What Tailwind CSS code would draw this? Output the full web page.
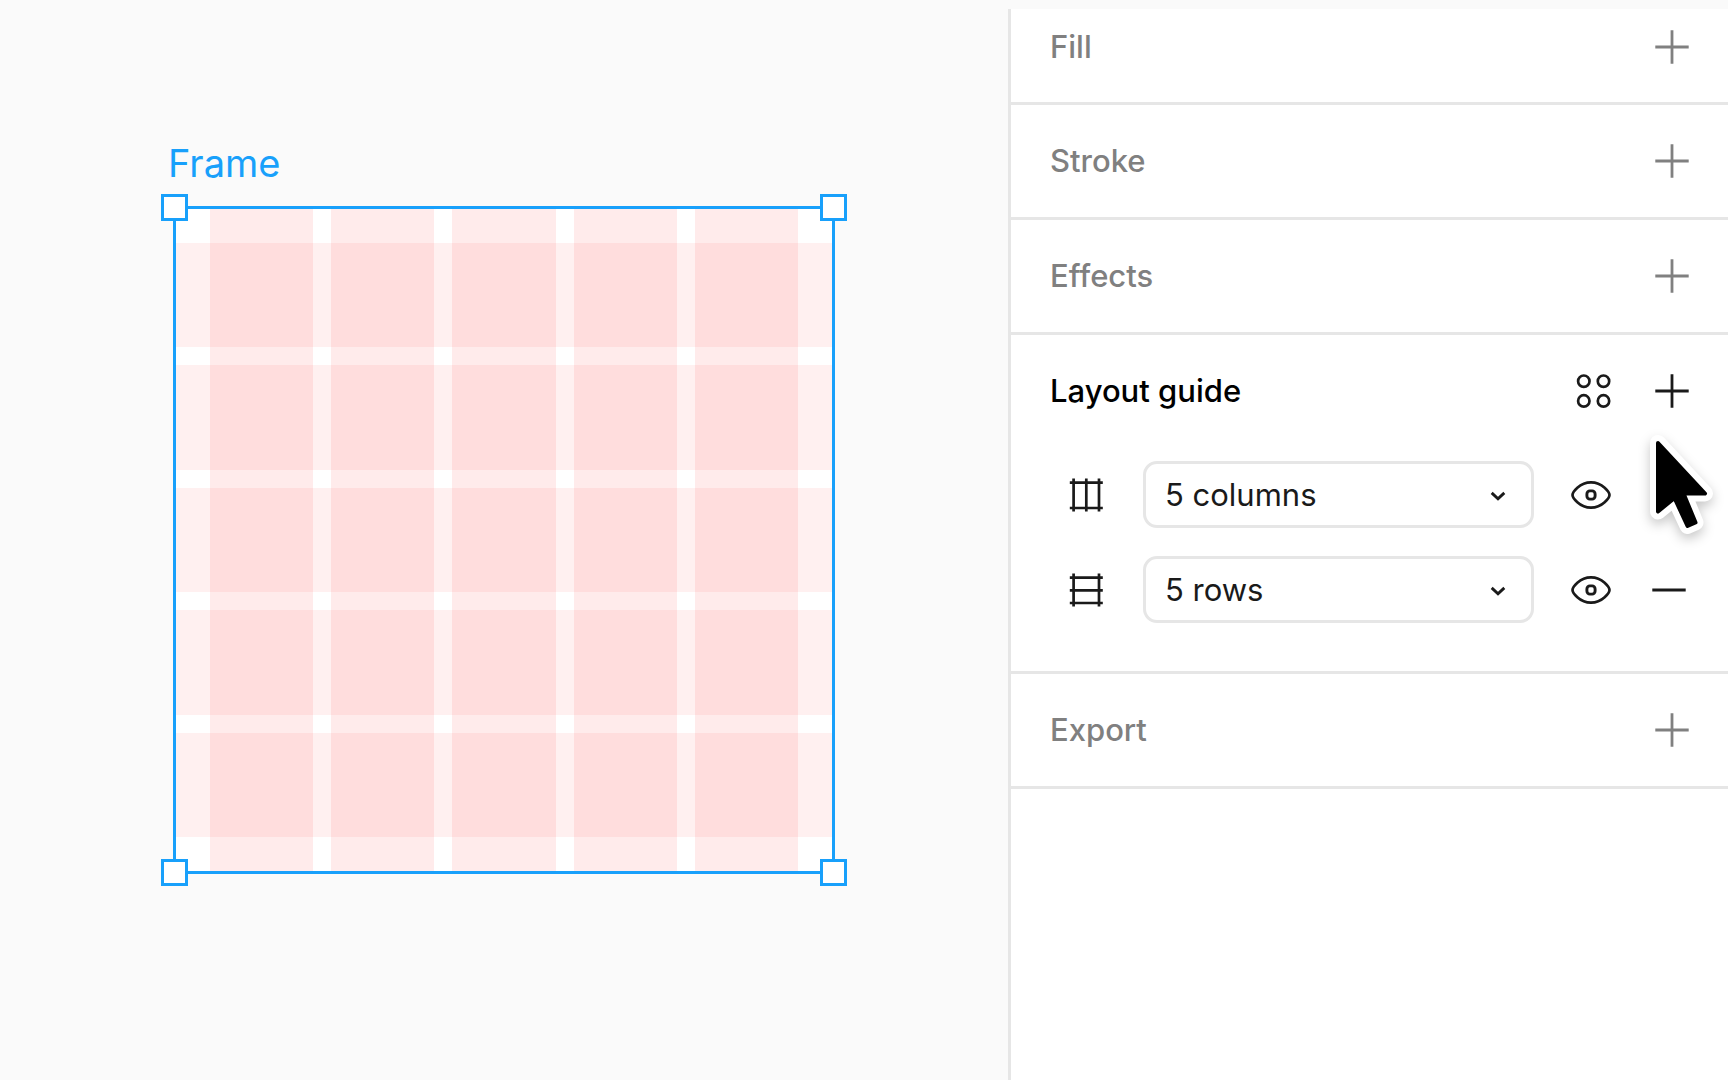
<!DOCTYPE html>
<html lang="en">
<head>
    <meta charset="UTF-8">
    <meta name="viewport" content="width=device-width, initial-scale=1.0">
    <title>Layout guide</title>
    <script src="https://cdn.jsdelivr.net/npm/@tailwindcss/browser@4"></script>
</head>
<body class="flex h-screen overflow-hidden bg-[#fafafa] font-['Inter',sans-serif]">

    <!-- shared icons -->
    <svg class="hidden">
        <symbol id="plus" viewBox="0 0 36 36"><path d="M18 1.3v33.4M1.3 18h33.4" fill="none" stroke="currentColor" stroke-width="2.8"/></symbol>
        <symbol id="minus" viewBox="0 0 36 36"><path d="M1.3 18h33.4" fill="none" stroke="currentColor" stroke-width="2.8"/></symbol>
        <symbol id="eye" viewBox="0 0 40 30">
            <path d="M1.5 15C1.5 12.6 8.3 2.3 20 2.3S38.5 12.6 38.5 15 31.7 27.7 20 27.7 1.5 17.4 1.5 15Z" fill="none" stroke="currentColor" stroke-width="2.7"/>
            <rect x="15.9" y="10.9" width="8.2" height="8.2" rx="3" fill="none" stroke="currentColor" stroke-width="2.9"/>
        </symbol>
        <symbol id="chevron" viewBox="0 0 16 10"><path d="M1.7 1.9 8 7.7l6.3-5.8" fill="none" stroke="currentColor" stroke-width="2.9"/></symbol>
    </svg>

    <!-- canvas -->
    <main class="flex flex-1 items-center justify-center">
        <div class="relative h-[668px] w-[662px] border-3 border-[#18a0fb] bg-white">
            <span class="absolute bottom-full -left-2 mb-5 text-[38px] leading-[52px] text-[#18a0fb]">Frame</span>

            <div class="absolute inset-0 grid grid-rows-5 gap-[18px] py-[34px]">
                <div class="bg-[#ff0000]/6"></div>
                <div class="bg-[#ff0000]/6"></div>
                <div class="bg-[#ff0000]/6"></div>
                <div class="bg-[#ff0000]/6"></div>
                <div class="bg-[#ff0000]/6"></div>
            </div>
            <div class="absolute inset-0 grid grid-cols-5 gap-[18px] px-[34px]">
                <div class="bg-[#ff0000]/8"></div>
                <div class="bg-[#ff0000]/8"></div>
                <div class="bg-[#ff0000]/8"></div>
                <div class="bg-[#ff0000]/8"></div>
                <div class="bg-[#ff0000]/8"></div>
            </div>

            <div class="absolute -top-[15px] -left-[15px] size-[27px] border-3 border-[#18a0fb] bg-white"></div>
            <div class="absolute -top-[15px] -right-[15px] size-[27px] border-3 border-[#18a0fb] bg-white"></div>
            <div class="absolute -bottom-[15px] -left-[15px] size-[27px] border-3 border-[#18a0fb] bg-white"></div>
            <div class="absolute -right-[15px] -bottom-[15px] size-[27px] border-3 border-[#18a0fb] bg-white"></div>
        </div>
    </main>

    <!-- properties panel -->
    <aside class="mt-[9px] w-5/12 border-l-3 border-[#e6e6e6] bg-white text-[31px] leading-10 text-[#1a1a1a]">
        <section class="flex h-24 items-center justify-between border-b-3 border-[#e6e6e6] pr-7 pb-[18px] pl-[39px] text-[#808080]">
            <h2 class="font-medium">Fill</h2>
            <button type="button" aria-label="Add fill" class="flex size-14 items-center justify-center"><svg class="size-9"><use href="#plus"/></svg></button>
        </section>
        <section class="flex h-[115px] items-center justify-between border-b-3 border-[#e6e6e6] pr-7 pl-[39px] text-[#808080]">
            <h2 class="font-medium">Stroke</h2>
            <button type="button" aria-label="Add stroke" class="flex size-14 items-center justify-center"><svg class="size-9"><use href="#plus"/></svg></button>
        </section>
        <section class="flex h-[115px] items-center justify-between border-b-3 border-[#e6e6e6] pr-7 pl-[39px] text-[#808080]">
            <h2 class="font-medium">Effects</h2>
            <button type="button" aria-label="Add effect" class="flex size-14 items-center justify-center"><svg class="size-9"><use href="#plus"/></svg></button>
        </section>

        <section class="border-b-3 border-[#e6e6e6] pb-12">
            <div class="flex h-28 items-center pr-7 pl-[39px]">
                <h2 class="flex-1 font-medium text-black">Layout guide</h2>
                <button type="button" aria-label="Styles" class="mr-[22px] flex size-14 items-center justify-center">
                    <svg class="size-9" viewBox="0 0 36 36" fill="none" stroke="currentColor" stroke-width="2.7">
                        <circle cx="7.8" cy="8.2" r="5.7"/>
                        <circle cx="27.5" cy="8.2" r="5.7"/>
                        <circle cx="7.8" cy="27.9" r="5.7"/>
                        <circle cx="27.5" cy="27.9" r="5.7"/>
                    </svg>
                </button>
                <button type="button" aria-label="Add layout guide" class="flex size-14 items-center justify-center"><svg class="size-9"><use href="#plus"/></svg></button>
            </div>

            <div class="flex flex-col gap-7 pt-[14px] pr-[31px] pl-[57px]">
                <div class="relative flex items-center">
                    <svg class="mr-[39px] size-9" viewBox="0 0 36 36" fill="none" stroke="currentColor" stroke-width="2.7">
                        <path d="M5.6 1.5v33M18.3 1.5v33M31 1.5v33M1.8 5.6h33M1.8 31h33"/>
                    </svg>
                    <div class="relative flex-1">
                        <select aria-label="Columns" class="block h-[67px] w-full appearance-none rounded-[14px] border-3 border-[#e6e6e6] bg-white pl-[19px]">
                            <option>5 columns</option>
                        </select>
                        <svg class="pointer-events-none absolute top-[30px] right-7 h-[10px] w-4"><use href="#chevron"/></svg>
                    </div>
                    <button type="button" aria-label="Hide columns" class="mr-[22px] ml-[29px] flex size-14 items-center justify-center"><svg class="h-[30px] w-10"><use href="#eye"/></svg></button>
                    <button type="button" aria-label="Remove columns" class="flex size-14 items-center justify-center"><svg class="size-9"><use href="#minus"/></svg></button>

                    <!-- mouse pointer -->
                    <svg class="pointer-events-none absolute -top-[30px] -right-[31px] h-[120px] w-[90px] drop-shadow-[0_5px_6px_rgb(0_0_0/0.22)]" viewBox="0 0 90 120" stroke-linejoin="round">
                        <path d="M20 12 67 62.500H45.500L57.500 91.500 49.500 95 36.500 67 20 80.500Z" fill="#fff" stroke="#fff" stroke-width="16"/>
                        <path d="M20 12 67 62.500H45.500L57.500 91.500 49.500 95 36.500 67 20 80.500Z" stroke="#000" stroke-width="4"/>
                    </svg>
                </div>

                <div class="flex items-center">
                    <svg class="mr-[39px] size-9" viewBox="0 0 36 36" fill="none" stroke="currentColor" stroke-width="2.7">
                        <path d="M5.6 1.5v33M31 1.5v33M1.8 5.6h33M1.8 18.3h33M1.8 31h33"/>
                    </svg>
                    <div class="relative flex-1">
                        <select aria-label="Rows" class="block h-[67px] w-full appearance-none rounded-[14px] border-3 border-[#e6e6e6] bg-white pl-[19px]">
                            <option>5 rows</option>
                        </select>
                        <svg class="pointer-events-none absolute top-[30px] right-7 h-[10px] w-4"><use href="#chevron"/></svg>
                    </div>
                    <button type="button" aria-label="Hide rows" class="mr-[22px] ml-[29px] flex size-14 items-center justify-center"><svg class="h-[30px] w-10"><use href="#eye"/></svg></button>
                    <button type="button" aria-label="Remove rows" class="flex size-14 items-center justify-center"><svg class="size-9"><use href="#minus"/></svg></button>
                </div>
            </div>
        </section>

        <section class="flex h-[115px] items-center justify-between border-b-3 border-[#e6e6e6] pr-7 pl-[39px] text-[#808080]">
            <h2 class="font-medium">Export</h2>
            <button type="button" aria-label="Add export" class="flex size-14 items-center justify-center"><svg class="size-9"><use href="#plus"/></svg></button>
        </section>
    </aside>
</body>
</html>
